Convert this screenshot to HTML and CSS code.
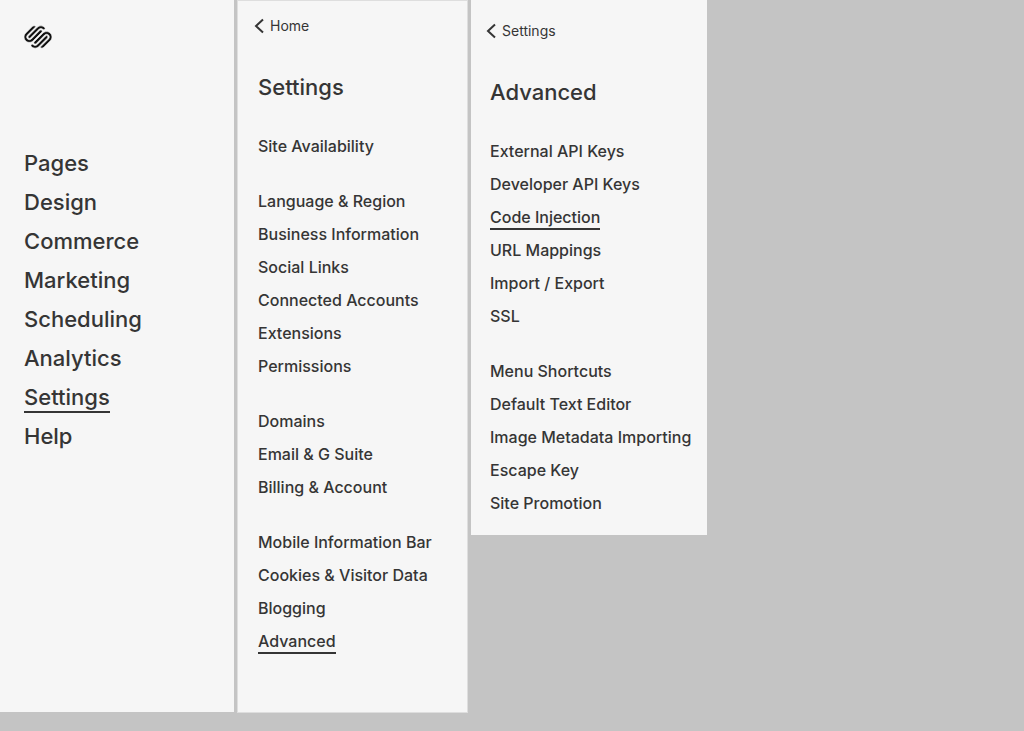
FILE: index.html
```
<!DOCTYPE html>
<html lang="en">
    <head>
        <title>Settings</title>
        <meta charset="UTF-8">
        <meta name="viewport" content="width=device-width">
        <link rel="stylesheet" href="styles.css">
    </head>
    <body>
        <div class="panels">
            <nav class="panel main-menu">
                <a class="logo" href="#" aria-label="Squarespace">
                    <svg width="28" height="28" viewBox="0 0 24 24"><path d="M22.655 8.719c-1.802-1.801-4.726-1.801-6.564 0l-7.351 7.35c-.45.45-.45 1.2 0 1.65.45.449 1.2.449 1.65 0l7.351-7.351c.899-.899 2.362-.899 3.263 0 .9.9.9 2.364 0 3.264l-7.239 7.239c.9.899 2.362.899 3.263 0l5.589-5.589c1.836-1.838 1.836-4.763.038-6.563zm-2.475 2.437c-.451-.45-1.201-.45-1.65 0l-7.354 7.389c-.9.899-2.361.899-3.262 0-.45-.45-1.2-.45-1.65 0s-.45 1.2 0 1.649c1.801 1.801 4.726 1.801 6.564 0l7.351-7.35c.449-.487.449-1.239.001-1.688zm-2.439-7.35c-1.801-1.801-4.726-1.801-6.564 0l-7.351 7.351c-.45.449-.45 1.199 0 1.649s1.2.45 1.65 0l7.395-7.351c.9-.899 2.371-.899 3.271 0 .451.45 1.201.45 1.65 0 .421-.487.421-1.199-.051-1.649zm-2.475 2.475c-.45-.449-1.2-.449-1.65 0l-7.351 7.351c-.899.9-2.361.9-3.262 0-.9-.899-.9-2.363 0-3.264L10.276 3.1c-.9-.9-2.362-.9-3.263 0L1.35 8.688c-1.8 1.801-1.8 4.762 0 6.562 1.8 1.8 4.725 1.8 6.563 0l7.353-7.35c.449-.45.449-1.2 0-1.619z"/></svg>
                </a>
                <ul>
                    <li><a href="#">Pages</a></li>
                    <li><a href="#">Design</a></li>
                    <li><a href="#">Commerce</a></li>
                    <li><a href="#">Marketing</a></li>
                    <li><a href="#">Scheduling</a></li>
                    <li><a href="#">Analytics</a></li>
                    <li><a class="active" href="#">Settings</a></li>
                    <li><a href="#">Help</a></li>
                </ul>
            </nav>

            <nav class="panel sub-menu settings">
                <a class="back" href="#">
                    <svg width="10" height="16" viewBox="0 0 10 16"><path d="M9 1.5L2 8l7 6.5"/></svg>
                    Home
                </a>
                <h2>Settings</h2>
                <ul>
                    <li><a href="#">Site Availability</a></li>
                </ul>
                <ul>
                    <li><a href="#">Language &amp; Region</a></li>
                    <li><a href="#">Business Information</a></li>
                    <li><a href="#">Social Links</a></li>
                    <li><a href="#">Connected Accounts</a></li>
                    <li><a href="#">Extensions</a></li>
                    <li><a href="#">Permissions</a></li>
                </ul>
                <ul>
                    <li><a href="#">Domains</a></li>
                    <li><a href="#">Email &amp; G Suite</a></li>
                    <li><a href="#">Billing &amp; Account</a></li>
                </ul>
                <ul>
                    <li><a href="#">Mobile Information Bar</a></li>
                    <li><a href="#">Cookies &amp; Visitor Data</a></li>
                    <li><a href="#">Blogging</a></li>
                    <li><a class="active" href="#">Advanced</a></li>
                </ul>
            </nav>

            <nav class="panel sub-menu advanced">
                <a class="back" href="#">
                    <svg width="10" height="16" viewBox="0 0 10 16"><path d="M9 1.5L2 8l7 6.5"/></svg>
                    Settings
                </a>
                <h2>Advanced</h2>
                <ul>
                    <li><a href="#">External API Keys</a></li>
                    <li><a href="#">Developer API Keys</a></li>
                    <li><a class="active" href="#">Code Injection</a></li>
                    <li><a href="#">URL Mappings</a></li>
                    <li><a href="#">Import / Export</a></li>
                    <li><a href="#">SSL</a></li>
                </ul>
                <ul>
                    <li><a href="#">Menu Shortcuts</a></li>
                    <li><a href="#">Default Text Editor</a></li>
                    <li><a href="#">Image Metadata Importing</a></li>
                    <li><a href="#">Escape Key</a></li>
                    <li><a href="#">Site Promotion</a></li>
                </ul>
            </nav>
        </div>
    </body>
</html>
```

FILE: styles.css
```
* {
    box-sizing: border-box;
}
body {
    margin: 0;
    background-color: #c4c4c4;
    color: #353535;
    font-family: Inter, "Liberation Sans", sans-serif;
    font-weight: 500;
}
a {
    color: inherit;
    text-decoration: none;
}
ul {
    list-style: none;
    margin: 0;
    padding: 0;
}
.panels {
    display: grid;
    grid-template-columns: 234fr 231fr 236fr 314fr;
    column-gap: 3px;
    align-items: start;
}
.panel {
    background-color: #f6f6f6;
    white-space: nowrap;
}

/* first column */
.main-menu {
    align-self: stretch;
    padding: 23px 24px;
    margin-bottom: 1px;
}
.logo {
    display: block;
    height: 28px;
    margin-bottom: 93px;
}
.logo svg {
    display: block;
    fill: #111;
    stroke: #f6f6f6;
    stroke-width: 0.6;
}
.main-menu li {
    height: 39px;
    font-size: 22px;
    line-height: 38px;
}
.active {
    display: inline-block;
    border-bottom: 2px solid #353535;
}
.main-menu .active {
    height: 35px;
}

/* settings and advanced columns */
.sub-menu {
    padding: 14px 16px;
}
.back {
    display: flex;
    align-items: center;
    gap: 6px;
    font-size: 14px;
    font-weight: 400;
    line-height: 22px;
}
.back svg {
    fill: none;
    stroke: #353535;
    stroke-width: 2;
}
.sub-menu h2 {
    margin: 34px 4px 27px;
    font-size: 22px;
    font-weight: 500;
    line-height: 32px;
}
.sub-menu ul {
    margin: 0 4px 22px;
}
.sub-menu ul:last-child {
    margin-bottom: 0;
}
.sub-menu li {
    height: 33px;
    font-size: 16px;
    line-height: 33px;
}
.sub-menu .active {
    height: 29px;
}
.settings {
    padding-bottom: 54px;
    border: 1px solid #dedede;
}
.advanced {
    padding: 20px 8px 15px 15px;
}
```
